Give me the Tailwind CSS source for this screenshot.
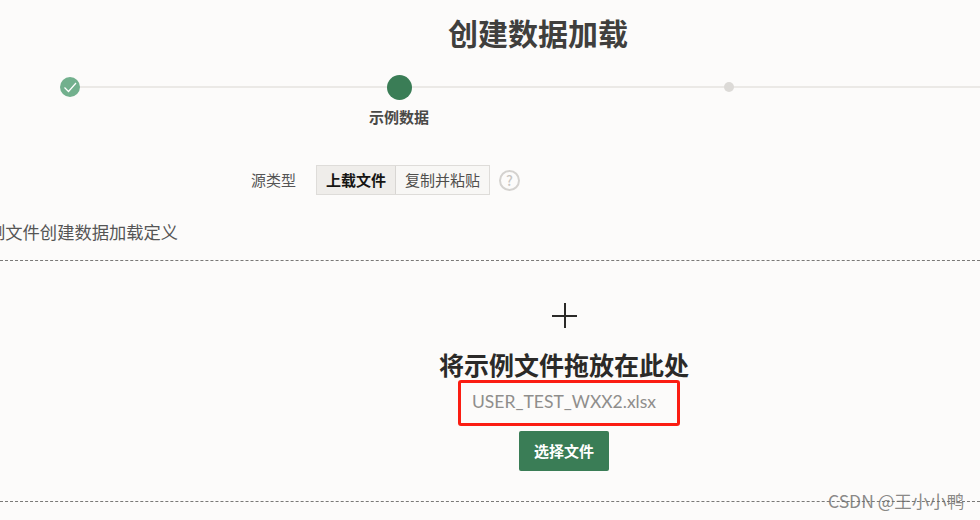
<!DOCTYPE html>
<html lang="zh-CN">
<head>
    <meta charset="UTF-8">
    <title>创建数据加载</title>
    <script src="https://cdn.jsdelivr.net/npm/@tailwindcss/browser@4"></script>
</head>
<body class="relative w-[980px] h-[520px] overflow-hidden bg-[#fcfbfa] text-[#404040] font-['Noto_Sans_CJK_SC','Noto_Sans',sans-serif]">

    <header class="h-[69px] pt-[11px] pl-[448px]">
        <h1 class="text-[30px] leading-[42px] font-bold text-[#403f3d] whitespace-nowrap">创建数据加载</h1>
    </header>

    <!-- wizard -->
    <div class="relative h-[60px] pl-[60px]">
        <div class="absolute left-[70px] right-0 top-[17px] h-[2px] bg-[#ebe9e6]"></div>
        <div class="relative flex items-start">
            <div class="w-[20px] h-[20px] mt-[8px] rounded-full bg-[#72b08d] flex items-center justify-center">
                <svg class="w-[16px] h-[16px]" viewBox="0 0 16 16" fill="none" stroke="#fff" stroke-width="1.2"><path d="M2.5 8.5 L6.5 12.5 L14 4"/></svg>
            </div>
            <div class="ml-[269px] w-[100px] flex flex-col items-center">
                <div class="w-[25px] h-[25px] mt-[6px] rounded-full bg-[#3a7d56]"></div>
                <span class="mt-[7px] text-[15px] leading-[20px] font-bold text-[#4a4947] whitespace-nowrap">示例数据</span>
            </div>
            <div class="ml-[275px] w-[10px] h-[10px] mt-[13px] rounded-full bg-[#dcdad7]"></div>
        </div>
    </div>

    <!-- source type -->
    <div class="mt-[36px] h-[30px] pl-[251px] flex items-center">
        <span class="w-[65px] text-[15px] text-[#555] whitespace-nowrap">源类型</span>
        <div class="flex h-[30px] border border-[#dedcd9] text-[15px] leading-[28px]">
            <span class="w-[79px] text-center font-bold text-[#161513] bg-[#efedea] border-r border-[#d8d6d3]">上载文件</span>
            <span class="w-[93px] text-center text-[#4f4e4c] bg-[#f8f7f5]">复制并粘贴</span>
        </div>
        <div class="ml-[9px] w-[21px] h-[21px] rounded-full border-2 border-[#d4d2cf] text-[#c8c6c3] text-[14px] leading-[17px] font-medium text-center">?</div>
    </div>

    <p class="mt-[24px] ml-[-12px] text-[17.3px] leading-[26px] text-[#555] whitespace-nowrap">例文件创建数据加载定义</p>

    <!-- drop zone -->
    <section class="mt-[15px] w-full h-[242px] border-y border-dashed border-[#7a7977] flex flex-col items-center pl-[148px]">
        <svg class="mt-[42px] ml-[1px] w-[25px] h-[25px] shrink-0" viewBox="0 0 25 25" stroke="#2b2a28" stroke-width="2" fill="none"><path d="M0 13 H25 M13 0 V25"/></svg>
        <h2 class="mt-[18px] text-[25px] leading-[36px] font-bold text-[#2b2a28] whitespace-nowrap">将示例文件拖放在此处</h2>
        <div class="mt-[-2px] ml-[10px] w-[222px] h-[46px] border-[3px] border-[#fb1d12] rounded-[3px] pl-[11px] font-['Lato',sans-serif] text-[17.5px] leading-[38px] text-[#8f8e8c] whitespace-nowrap">USER_TEST_WXX2.xlsx</div>
        <button class="mt-[5px] w-[90px] h-[40px] rounded-[2px] bg-[#3a7d56] text-white text-[15px] font-bold">选择文件</button>
    </section>

    <!-- watermark -->
    <div class="absolute left-[828px] top-[489px] text-[17.5px] leading-[24px] text-[#6b6a68]/80 whitespace-nowrap">CSDN @王小小鸭</div>
</body>
</html>
